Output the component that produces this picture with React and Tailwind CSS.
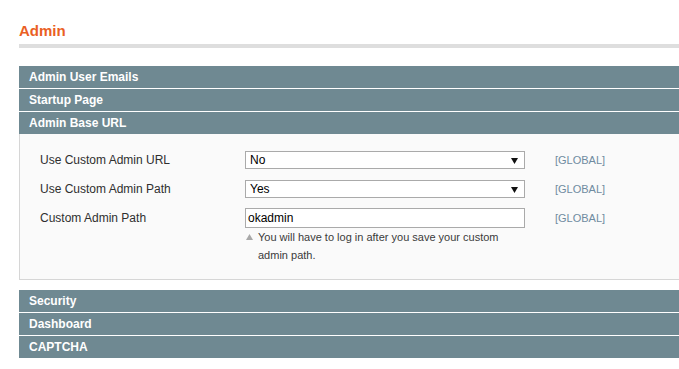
const sans = { fontFamily: '"Liberation Sans", Arial, sans-serif' };

function SectionBar({ title, last }) {
  return (
    <div
      className={`h-[22px] bg-[#6f8992] pl-[10px] text-[12px] font-bold leading-[22px] text-white ${
        last ? "" : "mb-px"
      }`}
    >
      {title}
    </div>
  );
}

function Arrow() {
  return (
    <svg width="7" height="6" viewBox="0 0 7 6" className="absolute right-[6px] top-[6px]">
      <polygon points="0,0 7,0 3.5,6" fill="#111" />
    </svg>
  );
}

function SelectBox({ value }) {
  return (
    <div className="relative h-[18px] w-[280px] border border-[#aaaaaa] bg-white pl-[4px] text-[12px] leading-[16px] text-black">
      {value}
      <Arrow />
    </div>
  );
}

function Row({ label, children, className = "" }) {
  return (
    <div className={`flex items-center ${className}`}>
      <div className="w-[205px] text-[12px] text-[#2f2f2f]">{label}</div>
      {children}
      <div className="ml-[30px] text-[11px] text-[#6f8ba0]">[GLOBAL]</div>
    </div>
  );
}

export default function App() {
  return (
    <div className="h-[369px] w-[679px] overflow-hidden bg-white pl-[19px] pt-[22px]" style={sans}>
      <div className="w-[700px]">
        {/* PAGE TITLE */}
        <h3 className="h-[18px] text-[15px] font-bold leading-[18px] text-[#ea5f24]">Admin</h3>
        <div className="mt-[4px] mb-[18px] h-[4px] bg-[#dedede]" />

        {/* COLLAPSED SECTIONS */}
        <SectionBar title="Admin User Emails" />
        <SectionBar title="Startup Page" />
        <SectionBar title="Admin Base URL" last />

        {/* OPEN SECTION */}
        <div className="border-b border-l border-[#d6d6d6] bg-[#fafafa] pb-[15px] pl-[20px] pt-[17px]">
          <Row label="Use Custom Admin URL">
            <SelectBox value="No" />
          </Row>
          <Row label="Use Custom Admin Path" className="mt-[11px]">
            <SelectBox value="Yes" />
          </Row>
          <Row label="Custom Admin Path" className="mt-[10px]">
            <div className="h-[20px] w-[280px] border border-[#aaaaaa] bg-white pl-[2px] text-[12px] leading-[18px] text-black">
              okadmin
            </div>
          </Row>
          <div className="ml-[205px] flex w-[280px] text-[11px] leading-[18px] text-[#3a3a3a]">
            <svg width="7" height="6" viewBox="0 0 7 6" className="ml-[1px] mr-[5px] mt-[6px] shrink-0">
              <polygon points="3.5,0 7,6 0,6" fill="#a8a8a8" />
            </svg>
            <p>
              You will have to log in after you save your custom
              <br />
              admin path.
            </p>
          </div>
        </div>

        <div className="mt-[10px]">
          <SectionBar title="Security" />
          <SectionBar title="Dashboard" />
          <SectionBar title="CAPTCHA" last />
        </div>
      </div>
    </div>
  );
}
